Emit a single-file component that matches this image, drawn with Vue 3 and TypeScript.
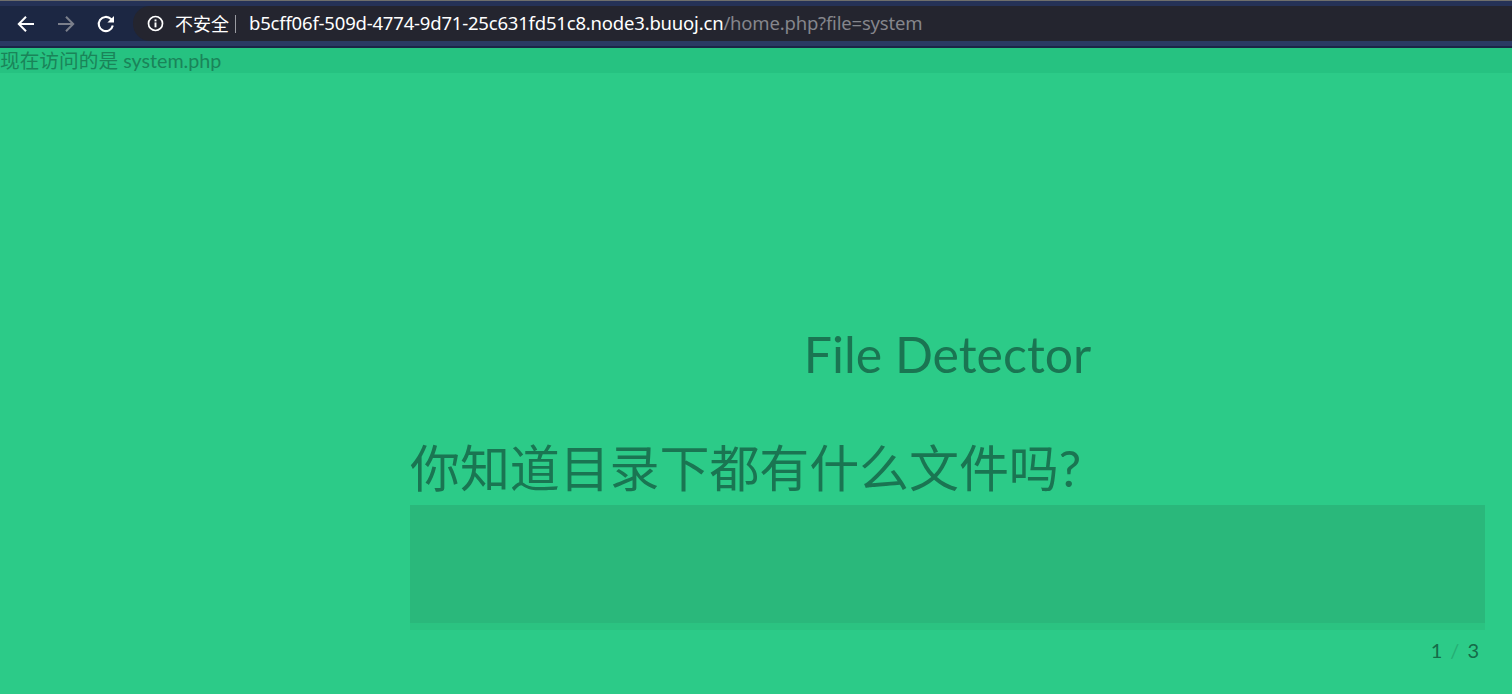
<script setup lang="ts">
const host: string = 'b5cff06f-509d-4774-9d71-25c631fd51c8.node3.buuoj.cn'
const path: string = '/home.php?file=system'
</script>

<template>
  <div class="page">
    <header class="browser">
      <div class="topline"></div>
      <div class="toolbar">
        <nav class="nav">
          <svg class="icon" viewBox="0 0 20 20" fill="none" stroke="#fff" stroke-width="2">
            <path d="M18 10H3M10 2.8 2.8 10l7.2 7.2" />
          </svg>
          <svg class="icon" viewBox="0 0 20 20" fill="none" stroke="#7b7f8b" stroke-width="2">
            <path d="M2 10h15M10 2.8l7.2 7.2-7.2 7.2" />
          </svg>
          <svg class="icon" viewBox="0 0 20 20" fill="none" stroke="#fff" stroke-width="2.1">
            <path d="M16.8 11.6A7.1 7.1 0 1 1 15 5.1L17 7.2" />
            <path d="M18 2v6.6h-6.6" fill="#fff" stroke="none" />
          </svg>
        </nav>
        <div class="omnibox">
          <svg class="info" viewBox="0 0 16 16" fill="none">
            <circle cx="8" cy="8" r="6.6" stroke="#fff" stroke-width="1.6" />
            <rect x="7.1" y="7" width="1.8" height="4.6" fill="#fff" />
            <rect x="7.1" y="4.2" width="1.8" height="1.8" fill="#fff" />
          </svg>
          <span class="insecure">不安全</span>
          <span class="sep"></span>
          <span class="url"><span class="host">{{ host }}</span><span class="path">{{ path }}</span></span>
        </div>
      </div>
      <div class="bottomline"></div>
    </header>

    <div class="notice">现在访问的是 system.php</div>

    <main class="stage">
      <h1 class="title">File Detector</h1>
      <h2 class="question">你知道目录下都有什么文件吗?</h2>
      <div class="field"></div>
      <div class="counter">
        <span>1</span><span class="slash">/</span><span>3</span>
      </div>
    </main>
  </div>
</template>

<style scoped>
.page {
  width: 1512px;
  height: 694px;
  overflow: hidden;
  display: flex;
  flex-direction: column;
  background: #2ccb88;
  font-family: Lato, "Noto Sans CJK SC", sans-serif;
  color: #1a7552;
}
.browser {
  height: 48px;
  flex: none;
  display: flex;
  flex-direction: column;
  background: #1c2743;
}
.topline {
  height: 6px;
  flex: none;
  background: linear-gradient(#6f6f6c 0 1px, #253257 1px);
}
.toolbar {
  height: 35px;
  flex: none;
  display: flex;
  align-items: center;
  padding-left: 16px;
  background: #1c2743;
}
.nav {
  display: flex;
  gap: 20px;
  width: 117px;
  flex: none;
}
.icon {
  width: 20px;
  height: 20px;
}
.omnibox {
  flex: 1;
  height: 35px;
  display: flex;
  align-items: center;
  padding-left: 14px;
  background: #24252f;
  border-radius: 17px 0 0 17px;
  font-family: "Noto Sans", "Noto Sans CJK SC", sans-serif;
  font-size: 18.5px;
  white-space: nowrap;
}
.info {
  width: 17px;
  height: 17px;
  flex: none;
}
.insecure {
  margin-left: 11px;
  color: #fff;
  font-size: 18px;
  line-height: 1;
}
.sep {
  width: 1px;
  height: 18px;
  margin: 0 13px 0 6px;
  background: #9a9ba1;
}
.url {
  letter-spacing: -0.19px;
  position: relative;
  top: -1px;
}
.host {
  color: #fff;
}
.path {
  color: #85868c;
}
.bottomline {
  height: 7px;
  flex: none;
  background: linear-gradient(#2a3a63 0 5px, #1b2647 5px);
}
.notice {
  height: 25px;
  flex: none;
  background: #26c281;
  font-size: 19.7px;
  line-height: 25px;
  color: #1a8459;
  white-space: nowrap;
}
.stage {
  flex: 1;
  display: flex;
  flex-direction: column;
  padding: 0 27px 0 410px;
}
.title {
  margin: 248px 0 0;
  height: 66px;
  font-size: 50px;
  font-weight: 400;
  line-height: 66px;
  text-align: center;
}
.question {
  margin: 51px 0 0;
  height: 67px;
  font-size: 50px;
  font-weight: 400;
  line-height: 61px;
  letter-spacing: -0.1px;
  white-space: nowrap;
}
.field {
  height: 118px;
  flex: none;
  background: #2ab87b;
  box-shadow: 0 7px 0 #2bc381;
}
.counter {
  align-self: flex-end;
  margin-top: 15px;
  padding-right: 6px;
  display: flex;
  gap: 8px;
  font-size: 20px;
  line-height: 24px;
  color: #156c49;
}
.slash {
  opacity: 0.3;
}
</style>
